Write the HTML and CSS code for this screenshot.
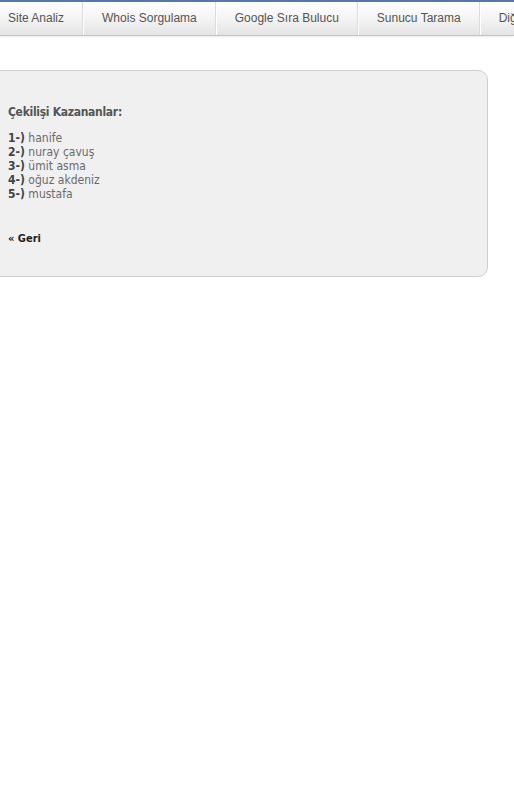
FILE: index.html
```html
<!DOCTYPE html>
<html lang="tr">
<head>
<meta charset="utf-8">
<link rel="stylesheet" href="styles.css">
</head>
<body>
<div class="topnav">
  <ul class="menu">
    <li class="first">Site Analiz</li>
    <li>Whois Sorgulama</li>
    <li>Google Sıra Bulucu</li>
    <li>Sunucu Tarama</li>
    <li>Diğer Araçlar</li>
  </ul>
</div>
<div class="box">
  <h3 class="title">Çekilişi Kazananlar:</h3>
  <ol class="winners">
    <li><b>1-)</b> hanife</li>
    <li><b>2-)</b> nuray çavuş</li>
    <li><b>3-)</b> ümit asma</li>
    <li><b>4-)</b> oğuz akdeniz</li>
    <li><b>5-)</b> mustafa</li>
  </ol>
  <a class="back" href="#">« Geri</a>
</div>
</body>
</html>
```
FILE: styles.css
```css
html, body {
  margin: 0;
  padding: 0;
  background: #fff;
  overflow: hidden;
}
body {
  width: 514px;
  height: 805px;
  font-family: "DejaVu Sans Condensed", Tahoma, "DejaVu Sans", sans-serif;
}
.topnav {
  border-top: 2px solid #5876a6;
  height: 33px;
  background: linear-gradient(#ffffff, #f4f4f4 50%, #e4e4e4);
  border-bottom: 1px solid #c4c4c4;
  box-shadow: 0 1px 2px rgba(0,0,0,0.08);
  overflow: hidden;
}
.menu {
  list-style: none;
  margin: 0;
  padding: 0;
  display: flex;
  white-space: nowrap;
  height: 33px;
}
.menu li {
  font-family: "Liberation Sans", Arial, sans-serif;
  font-size: 12px;
  color: #555;
  line-height: 33px;
  padding: 0 18px 0 19px;
  border-right: 1px solid #dcdcdc;
  box-shadow: 1px 0 0 #fff;
}
.menu li.first {
  padding-left: 8px;
}
.box {
  margin: 34px 0 0 -12px;
  width: 500px;
  box-sizing: border-box;
  background: #f0f0f0;
  border: 1px solid #cdcdcd;
  border-radius: 10px;
  padding: 34px 0 30px 19px;
}
.title {
  margin: 0;
  font-size: 12px;
  line-height: 14px;
  font-weight: bold;
  letter-spacing: -0.3px;
  color: #555;
}
.winners {
  list-style: none;
  margin: 12px 0 0 0;
  padding: 0;
}
.winners li {
  font-size: 12px;
  line-height: 14px;
  color: #6a6a6a;
}
.winners b {
  color: #444;
}
.back {
  display: block;
  margin-top: 31px;
  font-size: 11px;
  line-height: 14px;
  font-weight: bold;
  color: #222;
  text-decoration: none;
}
```
